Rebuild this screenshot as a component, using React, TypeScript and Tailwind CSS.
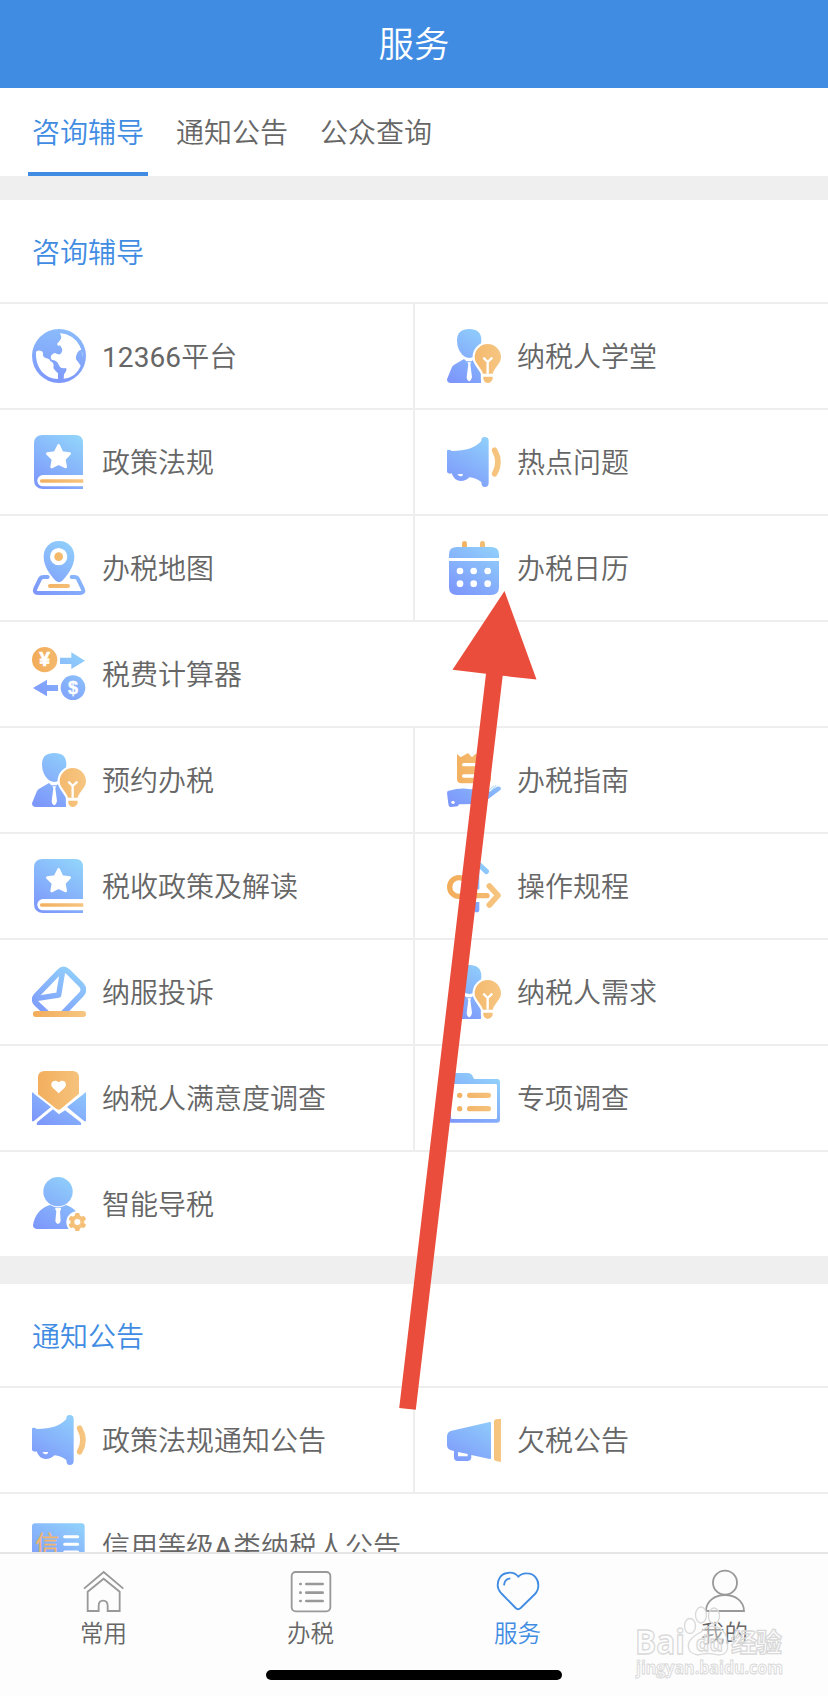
import type { ReactNode } from "react"
import clsx from "clsx"

const BLUE = "url(#icon-blue)"
const ORANGE = "url(#icon-orange)"

// Shared gradients, every service icon is drawn on a 162 x 162 grid
function Gradients() {
  return (
    <svg className="absolute w-0 h-0" aria-hidden="true">
      <defs>
        <linearGradient id="icon-blue" gradientUnits="userSpaceOnUse" x1="30" y1="162" x2="125" y2="0">
          <stop offset="0" stopColor="#7d97fb" />
          <stop offset="1" stopColor="#91d2fb" />
        </linearGradient>
        <linearGradient id="icon-globe" gradientUnits="userSpaceOnUse" x1="70" y1="162" x2="90" y2="0">
          <stop offset="0" stopColor="#7d97fb" />
          <stop offset="1" stopColor="#8bbcfb" />
        </linearGradient>
        <linearGradient id="icon-orange" gradientUnits="userSpaceOnUse" x1="0" y1="80" x2="162" y2="84">
          <stop offset="0" stopColor="#f2ac59" />
          <stop offset="1" stopColor="#f6c682" />
        </linearGradient>
      </defs>
    </svg>
  )
}

const icons: Record<string, ReactNode> = {
  globe: (
    <>
      <circle cx="81" cy="81" r="81" fill="url(#icon-globe)" />
      <path
        d="M12 68Q20 62 28 66Q34 68 33 78Q34 86 44 88Q54 90 55 96Q62 100 64 104Q66 110 64 117Q70 126 78 133V150C38 148 10 118 12 68Z"
        fill="#fff"
      />
      <path
        d="M84 12Q124 16 143 50L148 62Q138 64 134 76Q128 92 138 98L146 110C136 134 120 146 95 149L96 136Q108 120 101 117Q90 119 84 114L76 100Q68 92 60 93Q54 88 57 80Q66 68 74 74Q86 80 89 70Q94 60 86 54Q90 48 78 50Q72 44 81 38Q88 32 88 24Z"
        fill="#fff"
      />
      <path d="M149 68q5 8 2 14" stroke="#a6c6fd" strokeWidth="3" fill="none" />
    </>
  ),
  adviser: (
    <>
      <path d="M30 34C30 10 44 0 67 0S103 10 103 34C103 62 88 87 67 87S30 62 30 34Z" fill={BLUE} />
      <path d="M0 151L14 116Q16 110 24 106L51 90L58 97H74L81 90L102 103V162H9Q0 161 0 151Z" fill={BLUE} />
      <path d="M61 100H72L70 106L75 144Q73 155 67 157Q60 155 59 144L64 106Z" fill="#fff" />
      <path
        d="M122 45A40 40 0 0 1 162 85C162 104 142 118 137 134V146H108V134C103 118 83 104 83 85A40 40 0 0 1 122 45Z"
        fill="#fff"
        stroke="#fff"
        strokeWidth="13"
      />
      <path d="M122 45A40 40 0 0 1 162 85C162 104 142 116 137 134H108C103 116 83 104 83 85A40 40 0 0 1 122 45Z" fill={ORANGE} />
      <path d="M109 143H137V150Q132 162 122 162Q113 162 109 150Z" fill={ORANGE} />
      <path d="M109 86L122 99L136 86M122 99V134" stroke="#fff" strokeWidth="7" fill="none" />
    </>
  ),
  book: (
    <>
      <path d="M6 26Q6 0 32 0H130Q153 0 153 24V162H32Q6 160 6 134Z" fill={BLUE} />
      <path d="M154 120H33A17 17 0 0 0 33 154H154Z" fill="#fff" />
      <path d="M29 133H154V143H29A5 5 0 0 1 29 133Z" fill={ORANGE} />
      <path
        d="M80 31L90 53L113 56L97 73L101 96L80 86L59 96L63 73L46 56L69 53Z"
        fill="#fff"
        stroke="#fff"
        strokeWidth="8"
        strokeLinejoin="round"
      />
    </>
  ),
  horn: (
    <>
      <path
        d="M0 46Q7 42 14 48C58 48 86 38 103 18Q102 6 113 6Q125 6 125 18V144Q125 156 113 156Q103 156 103 141Q88 129 67 127Q58 138 40 138Q21 137 14 115Q6 118 0 112Z"
        fill={BLUE}
      />
      <path d="M31 118Q40 116 48 117Q48 124 40 124Q33 123 31 118Z" fill="#fff" />
      <path d="M143 46Q163 81 143 116" stroke={ORANGE} strokeWidth="17" strokeLinecap="round" fill="none" />
    </>
  ),
  map: (
    <>
      <path
        d="M47 108H35Q27 108 24 114L10 143Q5 156 18 156H145Q158 156 152 143L138 114Q135 108 127 108H119"
        stroke={BLUE}
        strokeWidth="12"
        strokeLinecap="round"
        fill="none"
      />
      <path d="M81 0A45 45 0 0 1 127 47C127 76 107 102 90 120Q81 127 72 120C54 102 35 76 35 47A45 45 0 0 1 81 0Z" fill={BLUE} />
      <circle cx="80" cy="47" r="26" fill="#fff" />
      <circle cx="80" cy="47" r="13" fill={ORANGE} />
      <rect x="48" y="129" width="66" height="12" rx="6" fill={ORANGE} />
    </>
  ),
  calendar: (
    <>
      <rect x="45" y="0" width="15" height="30" rx="7" fill={ORANGE} />
      <rect x="99" y="0" width="15" height="30" rx="7" fill={ORANGE} />
      <path d="M6 51V40Q6 18 30 18H132Q156 18 156 40V51Z" fill={BLUE} />
      <path d="M6 60H156V138Q156 162 132 162H30Q6 162 6 138Z" fill={BLUE} />
      {[39, 80, 122].map((x) => (
        <g key={x} fill="#fff">
          <circle cx={x} cy="90" r="10" />
          <circle cx={x} cy="128" r="10" />
        </g>
      ))}
    </>
  ),
  exchange: (
    <>
      <circle cx="38" cy="38" r="38" fill={ORANGE} />
      <path d="M84 32H118V16L159 41L118 66V51H84Z" fill={BLUE} />
      <path d="M78 132V114H45V98L3 123L45 148V132Z" fill={BLUE} />
      <circle cx="123" cy="122" r="37" fill={BLUE} />
      <g className="font-bold" fill="#fff" stroke="#fff" textAnchor="middle" fontFamily="Liberation Sans, sans-serif">
        <text x="38" y="58" fontSize="58" strokeWidth="2">¥</text>
        <text x="123" y="140" fontSize="54" strokeWidth="1">$</text>
      </g>
    </>
  ),
  guide: (
    <>
      <path d="M30 3L41 13L63 0L75 13L86 2L98 13L110 0L122 13L132 3V78Q132 91 118 91H44Q30 91 30 78Z" fill={ORANGE} />
      <path d="M50 35H112M50 69H112" stroke="#fff" strokeWidth="10" strokeLinecap="round" />
      <path d="M2 114L28 108Q50 104 70 109H96Q106 112 100 122L124 118L150 101Q164 98 161 110L112 147Q104 153 92 153L36 154L32 160L12 162Q5 162 4 152L0 120Z" fill={BLUE} />
      <path d="M120 117L140 99M130 117L148 96" stroke="#9bd0fb" strokeWidth="3" />
      <circle cx="18" cy="148" r="5" fill="#fff" />
    </>
  ),
  process: (
    <>
      <path d="M89 152V12M60 38L89 10L118 37" stroke={BLUE} strokeWidth="16" strokeLinecap="round" strokeLinejoin="round" fill="none" />
      <path d="M60 110H118" stroke="#fff" strokeWidth="38" />
      <circle cx="36" cy="84" r="28" stroke={ORANGE} strokeWidth="16" fill="none" />
      <path d="M50 110H120" stroke="#f4b86d" strokeWidth="16" strokeLinecap="round" />
      <path d="M127 81L153 109L127 138" stroke={ORANGE} strokeWidth="17" strokeLinecap="round" strokeLinejoin="round" fill="none" />
    </>
  ),
  vote: (
    <>
      <path
        d="M46 146L14 116Q2 103 14 91L82 20Q94 8 107 19L148 60Q160 74 149 87L92 146"
        stroke={BLUE}
        strokeWidth="17"
        fill="none"
      />
      <path d="M11 101L80 90L92 18" stroke={BLUE} strokeWidth="16" strokeLinejoin="round" fill="none" />
      <rect x="3" y="138" width="159" height="18" rx="8" fill={ORANGE} />
    </>
  ),
  loveMail: (
    <>
      <path d="M18 20Q18 0 38 0H122Q141 0 141 20V68L87 113Q80 119 73 113L18 70Z" fill={ORANGE} />
      <path d="M80 67L62 50C50 36 68 21 80 34C92 21 110 36 98 50Z" fill="#fff" />
      <path d="M0 65Q3 64 7 69L57 108L5 151L0 151Z" fill={BLUE} />
      <path d="M162 65Q159 64 155 69L105 108L157 151L162 151Z" fill={BLUE} />
      <path d="M17 152L63 115L81 130L99 118L144 152Q150 156 147 162H15Q12 156 17 152Z" fill={BLUE} />
    </>
  ),
  folder: (
    <>
      <path d="M3 16Q3 6 13 6H62Q74 6 79 20Q80 24 86 24H150Q159 24 159 33V146Q159 155 150 155H12Q3 155 3 146Z" fill={BLUE} />
      <rect x="12" y="39" width="138" height="105" rx="4" fill="#fff" />
      <g fill={ORANGE}>
        <circle cx="38" cy="73" r="8" />
        <circle cx="38" cy="113" r="8" />
        <rect x="60" y="65" width="72" height="16" rx="8" />
        <rect x="60" y="105" width="72" height="16" rx="8" />
      </g>
    </>
  ),
  agent: (
    <>
      <circle cx="78" cy="44" r="44" fill={BLUE} />
      <path d="M3 145Q10 98 54 84Q78 98 102 84Q122 90 132 104L110 156H14Q3 155 3 145Z" fill={BLUE} />
      <path d="M70 92H87V98L84 102L86 132Q84 140 78 141Q72 140 70 132L73 102L70 98Z" fill="#fff" />
      <circle cx="136" cy="136" r="33" fill="#fff" />
      <circle cx="136" cy="135" r="15" stroke={ORANGE} strokeWidth="12" fill="none" />
      <g fill="#f5be76">
        {[0, 60, 120, 180, 240, 300].map((a) => (
          <rect key={a} x="129" y="108" width="14" height="12" rx="4" transform={`rotate(${a} 136 135)`} />
        ))}
      </g>
    </>
  ),
  speaker: (
    <>
      <path
        d="M0 70Q0 57 14 53L128 27Q132 26 132 30V134Q132 139 128 138L73 126V132Q73 144 61 144H32Q21 144 21 132V114L10 111Q0 107 0 96Z"
        fill={BLUE}
      />
      <path d="M33 117L62 123V130H33Z" fill="#fff" />
      <path d="M141 26Q141 20 147 19L162 17V147L147 144Q141 143 141 138Z" fill={ORANGE} />
    </>
  ),
  credit: (
    <>
      <rect x="0" y="13" width="158" height="136" rx="9" fill={BLUE} />
      <text x="10" y="103" fontSize="72" fill="#f3b66c" stroke="#f3b66c" fontFamily="Noto Sans CJK SC, sans-serif">信</text>
      <path d="M98 53H137M98 76H137M98 99H137" stroke="#fff" strokeWidth="9" strokeLinecap="round" />
    </>
  ),
}

interface Service {
  icon: string
  label: ReactNode
}

const consultRows: Service[][] = [
  [
    { icon: "globe", label: <><span className="font-normal tracking-[0.1px]">12366</span>平台</> },
    { icon: "adviser", label: "纳税人学堂" },
  ],
  [{ icon: "book", label: "政策法规" }, { icon: "horn", label: "热点问题" }],
  [{ icon: "map", label: "办税地图" }, { icon: "calendar", label: "办税日历" }],
  [{ icon: "exchange", label: "税费计算器" }],
  [{ icon: "adviser", label: "预约办税" }, { icon: "guide", label: "办税指南" }],
  [{ icon: "book", label: "税收政策及解读" }, { icon: "process", label: "操作规程" }],
  [{ icon: "vote", label: "纳服投诉" }, { icon: "adviser", label: "纳税人需求" }],
  [{ icon: "loveMail", label: "纳税人满意度调查" }, { icon: "folder", label: "专项调查" }],
  [{ icon: "agent", label: "智能导税" }],
]

const noticeRows: Service[][] = [
  [{ icon: "horn", label: "政策法规通知公告" }, { icon: "speaker", label: "欠税公告" }],
  [{ icon: "credit", label: <>信用等级<span className="font-normal tracking-[0.8px]">A</span>类纳税人公告</> }],
]

function ServiceCell({ service, divided }: { service: Service; divided: boolean }) {
  return (
    <a
      href="#"
      className={clsx("flex items-center gap-4 pl-8 h-[104px]", divided ? "w-[415px] border-r-2 border-[#eeeeee]" : "flex-1")}
    >
      <svg className="w-[54px] h-[54px] shrink-0" viewBox="0 0 162 162">
        {icons[service.icon]}
      </svg>
      <span className="pt-1 whitespace-nowrap">{service.label}</span>
    </a>
  )
}

function Section({ title, rows }: { title: string; rows: Service[][] }) {
  return (
    <section className="bg-white shrink-0">
      <h2 className="h-[102px] px-8 pt-1.5 flex items-center text-[#418ce3]">{title}</h2>
      {rows.map((row, r) => (
        <div key={r} className="flex border-t-2 border-[#eeeeee]">
          {row.map((service, i) => (
            <ServiceCell key={i} service={service} divided={row.length > 1 && i === 0} />
          ))}
        </div>
      ))}
    </section>
  )
}

const tabs = [
  {
    label: "常用",
    icon: (
      <>
        <path d="M3 56L62 6L121 56" />
        <path d="M14 65V123H47V108Q47 92 60 92Q74 92 74 108V123H110V65L62 26Z" />
      </>
    ),
  },
  {
    label: "办税",
    icon: (
      <>
        <rect x="5" y="6" width="116" height="118" rx="12" />
        <path d="M49 42H98M49 68H98M49 93H98" strokeWidth="8" strokeLinecap="round" />
        <path d="M31 42H32M31 68H32M31 93H32" strokeWidth="8" strokeLinecap="round" />
      </>
    ),
  },
  {
    label: "服务",
    active: true,
    icon: (
      <>
        <path d="M64 20C54 8 40 7 31 9C10 12 2 30 2 46Q2 58 12 69L56 114Q63 121 71 114L114 72Q124 62 124 46C124 28 112 10 90 10Q74 9 64 20Z" />
        <path d="M21 46Q22 27 40 25" />
      </>
    ),
  },
  {
    label: "我的",
    icon: (
      <>
        <circle cx="63" cy="38" r="36" />
        <path d="M6 123C6 94 32 75 63 75S120 94 120 123Z" />
      </>
    ),
  },
]

function TabBar() {
  return (
    <nav className="h-36 shrink-0 border-t-2 border-[#e6e6e6] bg-[#fdfdfd]">
      <div className="grid grid-cols-4 pt-4">
        {tabs.map((tab) => (
          <a
            key={tab.label}
            href="#"
            className={clsx("flex flex-col items-center gap-2.5", tab.active ? "text-[#418ce3]" : "text-[#666666]")}
          >
            <svg
              className="w-[42px] h-[42px] overflow-visible"
              viewBox="0 0 126 126"
              fill="none"
              stroke={tab.active ? "#418ce3" : "#999999"}
              strokeWidth="5.5"
            >
              {tab.icon}
            </svg>
            <span className="text-[23.5px] leading-6">{tab.label}</span>
          </a>
        ))}
      </div>
      <div className="mt-6 mx-auto w-[296px] h-2.5 rounded-full bg-black" />
    </nav>
  )
}

function Watermark() {
  return (
    <svg className="absolute right-[33px] bottom-3 w-[160px] h-[84px]" viewBox="0 0 160 84">
      <g fill="#fdfdfd" fillOpacity="0.4" stroke="#d9d9d9" strokeWidth="1.3">
        <ellipse cx="55" cy="26" rx="5.5" ry="7.5" />
        <ellipse cx="66" cy="15" rx="5.5" ry="8" />
        <ellipse cx="79" cy="16" rx="5.5" ry="8" />
        <path d="M66 32Q74 23 84 28Q92 32 92 42Q95 55 83 55Q73 52 63 55Q51 53 54 42Q58 36 66 32Z" />
        <g className="font-bold" fontFamily="Open Sans, sans-serif">
          <text x="0" y="54" fontSize="34" textLength="50" lengthAdjust="spacingAndGlyphs">Bai</text>
          <text x="61" y="51" fontSize="22" textLength="27" lengthAdjust="spacingAndGlyphs">du</text>
          <text x="1" y="74" fontSize="18" textLength="147" lengthAdjust="spacingAndGlyphs" strokeWidth="1">
            jingyan.baidu.com
          </text>
        </g>
        <text className="font-bold" x="96" y="52" fontSize="26" textLength="51" fontFamily="Noto Sans CJK SC, sans-serif">经验</text>
      </g>
    </svg>
  )
}

export default function App() {
  return (
    <div className="relative flex flex-col w-[828px] h-[1696px] overflow-hidden bg-[#efefef] text-[28px] leading-10 font-[350] text-[#666666] font-['Roboto','Noto_Sans_CJK_SC',sans-serif]">
      <Gradients />

      <header className="h-[88px] pt-0.5 shrink-0 flex items-center justify-center bg-[#418ce3]">
        <h1 className="text-[35.5px] text-white">服务</h1>
      </header>

      <div className="h-[88px] shrink-0 flex gap-6 px-7 bg-white">
        <a href="#" className="flex items-center px-1 pt-2 w-[120px] border-b-4 border-[#418ce3] text-[#418ce3]">
          咨询辅导
        </a>
        <a href="#" className="flex items-center px-1 pt-1 w-[120px]">通知公告</a>
        <a href="#" className="flex items-center px-1 pt-1 w-[120px]">公众查询</a>
      </div>

      <main className="flex-1 min-h-0 overflow-hidden flex flex-col pt-6 gap-7">
        <Section title="咨询辅导" rows={consultRows} />
        <Section title="通知公告" rows={noticeRows} />
      </main>

      <TabBar />
      <Watermark />

      {/* Arrow pointing at the tax calendar entry */}
      <svg className="absolute inset-0 w-full h-full pointer-events-none" viewBox="0 0 828 1696">
        <path d="M504.5 591L536.5 679.5L502.7 675.8L415.8 1409.7L399.2 1408L486 673.7L452.5 669.7Z" fill="#ea4d3b" />
      </svg>
    </div>
  )
}
